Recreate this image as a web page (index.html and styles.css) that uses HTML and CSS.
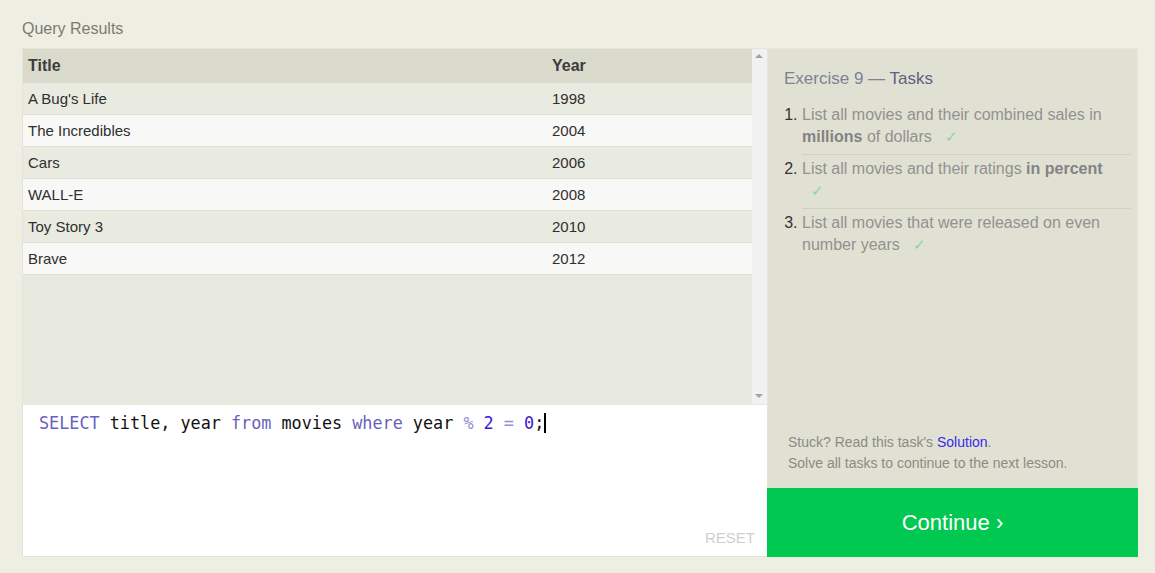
FILE: index.html
```html
<!DOCTYPE html>
<html>
<head>
<meta charset="utf-8">
<link rel="stylesheet" href="styles.css">
</head>
<body>
<div class="page">
  <div class="heading">Query Results</div>
  <div class="main">
    <div class="left">
      <div class="results">
        <div class="table-wrap">
          <table class="table">
            <thead>
              <tr><th class="col-title">Title</th><th>Year</th></tr>
            </thead>
            <tbody>
              <tr><td>A Bug's Life</td><td>1998</td></tr>
              <tr><td>The Incredibles</td><td>2004</td></tr>
              <tr><td>Cars</td><td>2006</td></tr>
              <tr><td>WALL-E</td><td>2008</td></tr>
              <tr><td>Toy Story 3</td><td>2010</td></tr>
              <tr><td>Brave</td><td>2012</td></tr>
            </tbody>
          </table>
        </div>
        <div class="scrollbar">
          <span class="arrow up"></span>
          <span class="arrow down"></span>
        </div>
      </div>
      <div class="editor">
        <div class="code"><span class="kw">SELECT</span> title, year <span class="kw">from</span> movies <span class="kw">where</span> year <span class="op">%</span> <span class="num">2</span> <span class="op">=</span> <span class="num">0</span>;<span class="cursor"></span></div>
        <div class="reset">RESET</div>
      </div>
    </div>
    <div class="right">
      <div class="tasks">
        <div class="ex-title">Exercise 9 — <span class="tasks-word">Tasks</span></div>
        <ol class="task-list">
          <li><span class="task-text">List all movies and their combined sales in <b>millions</b> of dollars <span class="check">✓</span></span></li>
          <li><span class="task-text">List all movies and their ratings <b>in percent</b> <span class="check">✓</span></span></li>
          <li><span class="task-text">List all movies that were released on even number years <span class="check">✓</span></span></li>
        </ol>
        <div class="help">
          <div>Stuck? Read this task's <a class="link">Solution</a>.</div>
          <div>Solve all tasks to continue to the next lesson.</div>
        </div>
      </div>
      <div class="continue">Continue ›</div>
    </div>
  </div>
</div>
</body>
</html>
```

FILE: styles.css
```css
html, body {
  margin: 0;
  padding: 0;
  background: #efeee2;
  font-family: "Liberation Sans", Arial, sans-serif;
}

.page {
  padding: 19px 17px 16px 22px;
}

.heading {
  font-size: 16px;
  color: #7b7b74;
  line-height: 20px;
  margin-bottom: 9px;
}

.main {
  display: flex;
  height: 509px;
}

.left {
  width: 745px;
  display: flex;
  flex-direction: column;
  border: 1px solid #e4e4d8;
  border-right: none;
  box-sizing: border-box;
}

.results {
  height: 355px;
  display: flex;
  background: #e8e9df;
}

.table-wrap {
  flex: 1;
}

.table {
  width: 100%;
  border-collapse: collapse;
}

.table th {
  background: #d9dacb;
  text-align: left;
  font-weight: bold;
  font-size: 16px;
  color: #3c3c3c;
  height: 34px;
  padding: 0 5px;
}

.table .col-title {
  width: 514px;
}

.table td {
  height: 31px;
  padding: 0 5px;
  font-size: 15px;
  color: #2f2f2f;
  border-bottom: 1px solid #e0e0d8;
}

.table tbody tr:nth-child(odd) td {
  background: #e9eae0;
}

.table tbody tr:nth-child(even) td {
  background: #f8f8f7;
}

.scrollbar {
  width: 15px;
  background: #f1f1f1;
  position: relative;
}

.arrow {
  position: absolute;
  left: 3px;
  width: 0;
  height: 0;
  border-left: 4px solid transparent;
  border-right: 4px solid transparent;
}

.arrow.up {
  top: 5px;
  border-bottom: 4px solid #a3a3a3;
}

.arrow.down {
  bottom: 6px;
  border-top: 4px solid #a3a3a3;
}

.editor {
  flex: 1;
  background: #ffffff;
  position: relative;
  padding: 8px 16px;
  border-top: 1px solid #e8e8e0;
}

.code {
  font-family: "DejaVu Sans Mono", monospace;
  font-size: 16.8px;
  line-height: 20px;
  color: #111;
  white-space: pre;
}

.kw {
  color: #6a5fc0;
}

.op {
  color: #8f8fd8;
}

.num {
  color: #3a16d9;
}

.cursor {
  display: inline-block;
  width: 2px;
  height: 20px;
  background: #000;
  vertical-align: -4px;
}

.reset {
  position: absolute;
  right: 12px;
  bottom: 10px;
  font-size: 15px;
  color: #cfcfcf;
}

.right {
  width: 371px;
  display: flex;
  flex-direction: column;
}

.tasks {
  flex: 1;
  background: #e1e1d3;
  padding: 19px 6px 14px 16px;
  display: flex;
  flex-direction: column;
  border: 1px solid #e6e6da;
  border-bottom: none;
}

.ex-title {
  font-size: 17px;
  color: #7d8196;
  line-height: 22px;
}

.task-list {
  margin: 14px 0 0 0;
  padding: 0 0 0 18px;
  font-size: 16px;
  line-height: 22px;
  color: #333;
}

.tasks-word {
  color: #5d6280;
}

.task-list li {
  padding: 0 20px 6px 0;
  margin-bottom: 3px;
  border-bottom: 1px solid #d0d0c4;
}

.task-list li:last-child {
  border-bottom: none;
}

.task-text {
  color: #919191;
}

.task-text b {
  color: #838383;
}

.check {
  display: inline-block;
  color: #7fdc96;
  font-size: 15px;
  padding-left: 9px;
}

.help {
  margin-top: auto;
  padding-left: 4px;
  font-size: 14px;
  line-height: 21px;
  color: #8b8b83;
}

.link {
  color: #3a2ae8;
  cursor: pointer;
}

.continue {
  height: 69px;
  background: #00c850;
  color: #ffffff;
  font-size: 22px;
  display: flex;
  align-items: center;
  justify-content: center;
}
```
